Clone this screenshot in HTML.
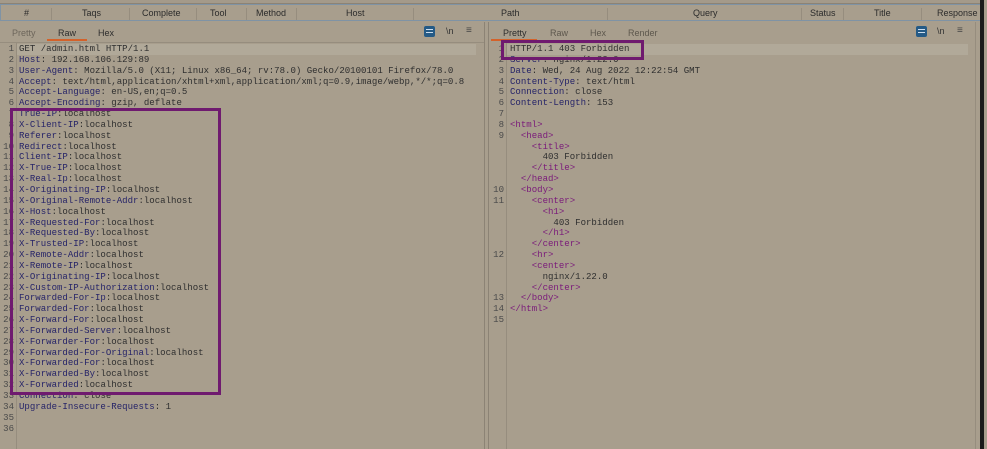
<!DOCTYPE html><html><head><style>
body{margin:0;width:987px;height:449px;overflow:hidden;background:#a89e8d;font-family:"Liberation Sans",sans-serif;position:relative}
.a{position:absolute}
.hdr{top:4px;left:0;width:980px;height:15px;border:1px solid #7f93a5;border-left:1px solid #7f93a5;font-size:9px;color:#2b2b2b;line-height:16px}
.hdr span{position:absolute;top:0}
.sep{position:absolute;top:3px;width:1px;height:12px;background:#968d7e}
.code{font-family:"Liberation Mono",monospace;font-size:9.05px;line-height:10.85px;white-space:pre;color:#2f2f2f}
.ln{color:#4a4a4a;text-align:right;width:14px}
.k{color:#262468}.t{color:#7a1a7a}
.tab{font-size:9px;top:28px;color:#2d2d2d}
</style></head><body>
<div class="a" style="left:0;top:0;width:980px;height:3px;background:#a49a8a;border-bottom:1px solid #8c8375"></div>
<div class="a hdr">
<span style="left:23px">#</span><span style="left:81px">Taqs</span><span style="left:141px">Complete</span><span style="left:209px">Tool</span><span style="left:255px">Method</span><span style="left:345px">Host</span><span style="left:500px">Path</span><span style="left:692px">Query</span><span style="left:809px">Status</span><span style="left:873px">Title</span><span style="left:936px">Response</span>
<i class="sep" style="left:50px"></i><i class="sep" style="left:128px"></i><i class="sep" style="left:195px"></i><i class="sep" style="left:245px"></i><i class="sep" style="left:295px"></i><i class="sep" style="left:412px"></i><i class="sep" style="left:606px"></i><i class="sep" style="left:800px"></i><i class="sep" style="left:842px"></i><i class="sep" style="left:920px"></i>
</div>
<div class="a" style="left:980px;top:0;width:4px;height:449px;background:#1a1a1a"></div>
<div class="a" style="left:484px;top:22px;width:1px;height:427px;background:#8c8375"></div>
<div class="a" style="left:488px;top:22px;width:1px;height:427px;background:#8c8375"></div>
<div class="a" style="left:975px;top:22px;width:1px;height:427px;background:#968d7e"></div>
<div class="a tab" style="left:12px;color:#6d665b">Pretty</div>
<div class="a tab" style="left:58px">Raw</div>
<div class="a tab" style="left:98px">Hex</div>
<div class="a" style="left:47px;top:39px;width:40px;height:2px;background:#d4622a"></div>
<div class="a" style="left:424px;top:26px;width:11px;height:11px;background:#245a86;border-radius:2px"></div>
<div class="a" style="left:426px;top:29px;width:7px;height:1px;background:#cde"></div><div class="a" style="left:426px;top:32px;width:7px;height:1px;background:#cde"></div>
<div class="a" style="left:446px;top:26px;font-size:9px;color:#333">\n</div>
<div class="a" style="left:466px;top:25px;font-size:10px;color:#444">≡</div>
<div class="a" style="left:0;top:42px;width:484px;height:1px;background:#968d7e"></div>
<div class="a tab" style="left:503px">Pretty</div>
<div class="a tab" style="left:550px;color:#5d574d">Raw</div>
<div class="a tab" style="left:590px;color:#5d574d">Hex</div>
<div class="a tab" style="left:628px;color:#5d574d">Render</div>
<div class="a" style="left:491px;top:39px;width:46px;height:2px;background:#d4622a"></div>
<div class="a" style="left:916px;top:26px;width:11px;height:11px;background:#245a86;border-radius:2px"></div>
<div class="a" style="left:918px;top:29px;width:7px;height:1px;background:#cde"></div><div class="a" style="left:918px;top:32px;width:7px;height:1px;background:#cde"></div>
<div class="a" style="left:937px;top:26px;font-size:9px;color:#333">\n</div>
<div class="a" style="left:957px;top:25px;font-size:10px;color:#444">≡</div>
<div class="a" style="left:17px;top:44px;width:459px;height:11px;background:#b1a999"></div>
<div class="a" style="left:507px;top:44px;width:461px;height:11px;background:#b1a999"></div>
<div class="a" style="left:16px;top:43px;width:1px;height:406px;background:#968d7e"></div>
<div class="a" style="left:506px;top:43px;width:1px;height:406px;background:#968d7e"></div>
<div class="a code ln" style="left:0;top:44px">1
2
3
4
5
6
7
8
9
10
11
12
13
14
15
16
17
18
19
20
21
22
23
24
25
26
27
28
29
30
31
32
33
34
35
36</div>
<div class="a code" style="left:19px;top:44px">GET /admin.html HTTP/1.1
<span class="k">Host</span>: 192.168.106.129:89
<span class="k">User-Agent</span>: Mozilla/5.0 (X11; Linux x86_64; rv:78.0) Gecko/20100101 Firefox/78.0
<span class="k">Accept</span>: text/html,application/xhtml+xml,application/xml;q=0.9,image/webp,*/*;q=0.8
<span class="k">Accept-Language</span>: en-US,en;q=0.5
<span class="k">Accept-Encoding</span>: gzip, deflate
<span class="k">True-IP</span>:localhost
<span class="k">X-Client-IP</span>:localhost
<span class="k">Referer</span>:localhost
<span class="k">Redirect</span>:localhost
<span class="k">Client-IP</span>:localhost
<span class="k">X-True-IP</span>:localhost
<span class="k">X-Real-Ip</span>:localhost
<span class="k">X-Originating-IP</span>:localhost
<span class="k">X-Original-Remote-Addr</span>:localhost
<span class="k">X-Host</span>:localhost
<span class="k">X-Requested-For</span>:localhost
<span class="k">X-Requested-By</span>:localhost
<span class="k">X-Trusted-IP</span>:localhost
<span class="k">X-Remote-Addr</span>:localhost
<span class="k">X-Remote-IP</span>:localhost
<span class="k">X-Originating-IP</span>:localhost
<span class="k">X-Custom-IP-Authorization</span>:localhost
<span class="k">Forwarded-For-Ip</span>:localhost
<span class="k">Forwarded-For</span>:localhost
<span class="k">X-Forward-For</span>:localhost
<span class="k">X-Forwarded-Server</span>:localhost
<span class="k">X-Forwarder-For</span>:localhost
<span class="k">X-Forwarded-For-Original</span>:localhost
<span class="k">X-Forwarded-For</span>:localhost
<span class="k">X-Forwarded-By</span>:localhost
<span class="k">X-Forwarded</span>:localhost
<span class="k">Connection</span>: close
<span class="k">Upgrade-Insecure-Requests</span>: 1</div>
<div class="a code ln" style="left:490px;top:44px">1
2
3
4
5
6
7
8
9




10
11




12



13
14
15</div>
<div class="a code" style="left:510px;top:44px">HTTP/1.1 403 Forbidden
<span class="k">Server</span>: nginx/1.22.0
<span class="k">Date</span>: Wed, 24 Aug 2022 12:22:54 GMT
<span class="k">Content-Type</span>: text/html
<span class="k">Connection</span>: close
<span class="k">Content-Length</span>: 153

<span class="t">&lt;html&gt;</span>
  <span class="t">&lt;head&gt;</span>
    <span class="t">&lt;title&gt;</span>
      403 Forbidden
    <span class="t">&lt;/title&gt;</span>
  <span class="t">&lt;/head&gt;</span>
  <span class="t">&lt;body&gt;</span>
    <span class="t">&lt;center&gt;</span>
      <span class="t">&lt;h1&gt;</span>
        403 Forbidden
      <span class="t">&lt;/h1&gt;</span>
    <span class="t">&lt;/center&gt;</span>
    <span class="t">&lt;hr&gt;</span>
    <span class="t">&lt;center&gt;</span>
      nginx/1.22.0
    <span class="t">&lt;/center&gt;</span>
  <span class="t">&lt;/body&gt;</span>
<span class="t">&lt;/html&gt;</span>
</div>
<div class="a" style="left:10px;top:108px;width:205px;height:281px;border:3px solid #6f1a6f"></div>
<div class="a" style="left:501px;top:40px;width:137px;height:14px;border:3px solid #6f1a6f"></div>
</body></html>
